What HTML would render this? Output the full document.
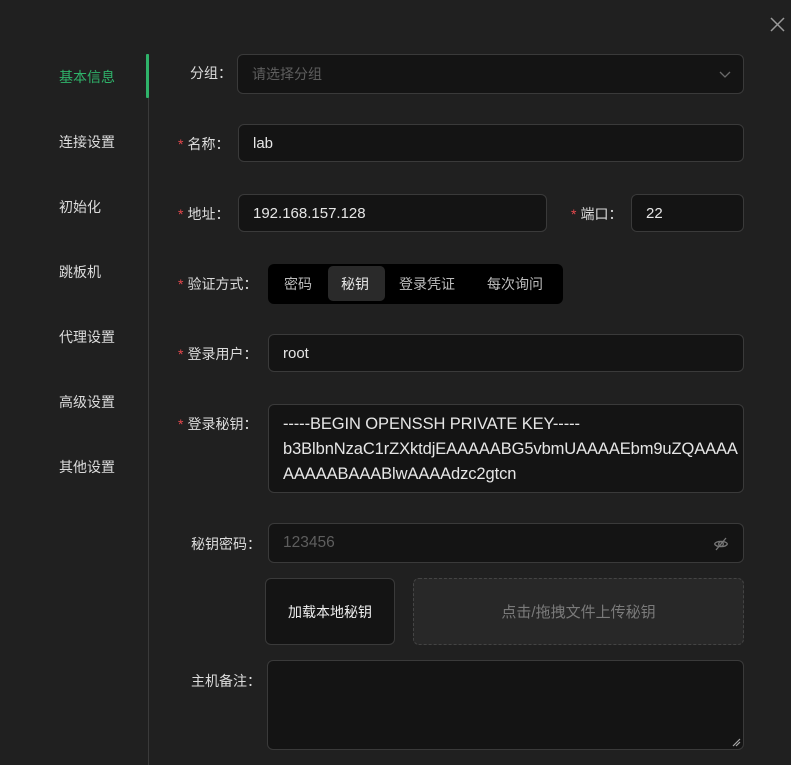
<!DOCTYPE html>
<html><head><meta charset="utf-8"><style>
*{box-sizing:border-box;margin:0;padding:0}
body{width:791px;height:765px;background:#202020;font-family:"Liberation Sans","Noto Sans CJK SC",sans-serif;font-size:14px;color:#e0e0e0;position:relative;overflow:hidden}
.a{position:absolute}
.nav{left:59px;color:#dcdcdc;font-size:14px}
.inp{position:absolute;background:#141414;border:1px solid #3a3a3a;border-radius:6px;color:#e6e6e6;padding-left:14px;display:flex;align-items:center;font-size:15px}
.lbl{position:absolute;color:#dcdcdc;line-height:20px;white-space:nowrap}
.req{color:#e5484d;margin-right:4px}
</style></head><body>
<svg class="a" style="left:770px;top:17px" width="15" height="15"><path d="M1 1L14 14M14 1L1 14" stroke="#9a9a9a" stroke-width="1.5"/></svg>
<div class="a" style="left:148px;top:54px;width:1px;height:711px;background:#3a3a3a"></div>
<div class="a" style="left:146px;top:54px;width:3px;height:44px;background:#2fb36a;border-radius:1px"></div>
<div class="a nav" style="top:67px;color:#2fb36a">基本信息</div>
<div class="a nav" style="top:132px">连接设置</div>
<div class="a nav" style="top:197px">初始化</div>
<div class="a nav" style="top:262px">跳板机</div>
<div class="a nav" style="top:327px">代理设置</div>
<div class="a nav" style="top:392px">高级设置</div>
<div class="a nav" style="top:457px">其他设置</div>

<div class="lbl" style="left:190px;top:63px">分组：</div>
<div class="inp" style="left:237px;top:54px;width:507px;height:40px;color:#5e5e5e;font-size:14px">请选择分组
<svg class="a" style="right:12px;top:14px" width="12" height="10" viewBox="0 0 12 10"><path d="M1 3l5 5 5-5" stroke="#6a6a6a" fill="none" stroke-width="1.3"/></svg></div>

<div class="lbl" style="left:178px;top:134px"><span class="req">*</span>名称：</div>
<div class="inp" style="left:238px;top:124px;width:506px;height:38px">lab</div>

<div class="lbl" style="left:178px;top:204px"><span class="req">*</span>地址：</div>
<div class="inp" style="left:238px;top:194px;width:309px;height:38px">192.168.157.128</div>
<div class="lbl" style="left:571px;top:204px"><span class="req">*</span>端口：</div>
<div class="inp" style="left:631px;top:194px;width:113px;height:38px">22</div>

<div class="lbl" style="left:178px;top:274px"><span class="req">*</span>验证方式：</div>
<div class="a" style="left:268px;top:264px;width:295px;height:40px;background:#000;border-radius:6px"></div>
<div class="a" style="left:328px;top:266px;width:57px;height:35px;background:#2a2a2a;border-radius:5px"></div>
<div class="a" style="left:284px;top:274px;color:#bdbdbd">密码</div>
<div class="a" style="left:341px;top:274px;color:#e6e6e6">秘钥</div>
<div class="a" style="left:399px;top:274px;color:#bdbdbd">登录凭证</div>
<div class="a" style="left:487px;top:274px;color:#bdbdbd">每次询问</div>

<div class="lbl" style="left:178px;top:344px"><span class="req">*</span>登录用户：</div>
<div class="inp" style="left:268px;top:334px;width:476px;height:38px">root</div>

<div class="lbl" style="left:178px;top:414px"><span class="req">*</span>登录秘钥：</div>
<div class="inp" style="left:268px;top:404px;width:476px;height:89px;display:block;padding-top:7px;line-height:25px;font-size:16.5px;letter-spacing:-0.1px;white-space:nowrap">-----BEGIN OPENSSH PRIVATE KEY-----<br>b3BlbnNzaC1rZXktdjEAAAAABG5vbmUAAAAEbm9uZQAAAA<br>AAAAABAAABlwAAAAdzc2gtcn</div>

<div class="lbl" style="left:191px;top:534px">秘钥密码：</div>
<div class="inp" style="left:268px;top:523px;width:476px;height:40px;color:#5e5e5e;font-size:15.5px">123456
<svg class="a" style="right:14px;top:12px" width="16" height="16" viewBox="0 0 16 16"><path d="M1.5 8c2-3.5 11-3.5 13 0M1.5 8c2 3.5 11 3.5 13 0" stroke="#777" fill="none" stroke-width="1.3"/><circle cx="8" cy="8" r="2.3" stroke="#777" fill="none" stroke-width="1.3"/><path d="M13 2L3 14" stroke="#777" stroke-width="1.3"/></svg></div>

<div class="a" style="left:265px;top:578px;width:130px;height:67px;background:#141414;border:1px solid #3a3a3a;border-radius:6px;display:flex;align-items:center;justify-content:center;color:#eee">加载本地秘钥</div>
<div class="a" style="left:413px;top:578px;width:331px;height:67px;background:#282828;border:1px dashed #444;border-radius:6px;display:flex;align-items:center;justify-content:center;color:#7a7a7a;font-size:15px">点击/拖拽文件上传秘钥</div>

<div class="lbl" style="left:191px;top:671px">主机备注：</div>
<div class="inp" style="left:267px;top:660px;width:477px;height:90px"></div>
<svg class="a" style="left:732px;top:738px" width="9" height="9"><path d="M1 8L8 1M4 8L8 4" stroke="#aaa" stroke-width="1.2"/></svg>
</body></html>
